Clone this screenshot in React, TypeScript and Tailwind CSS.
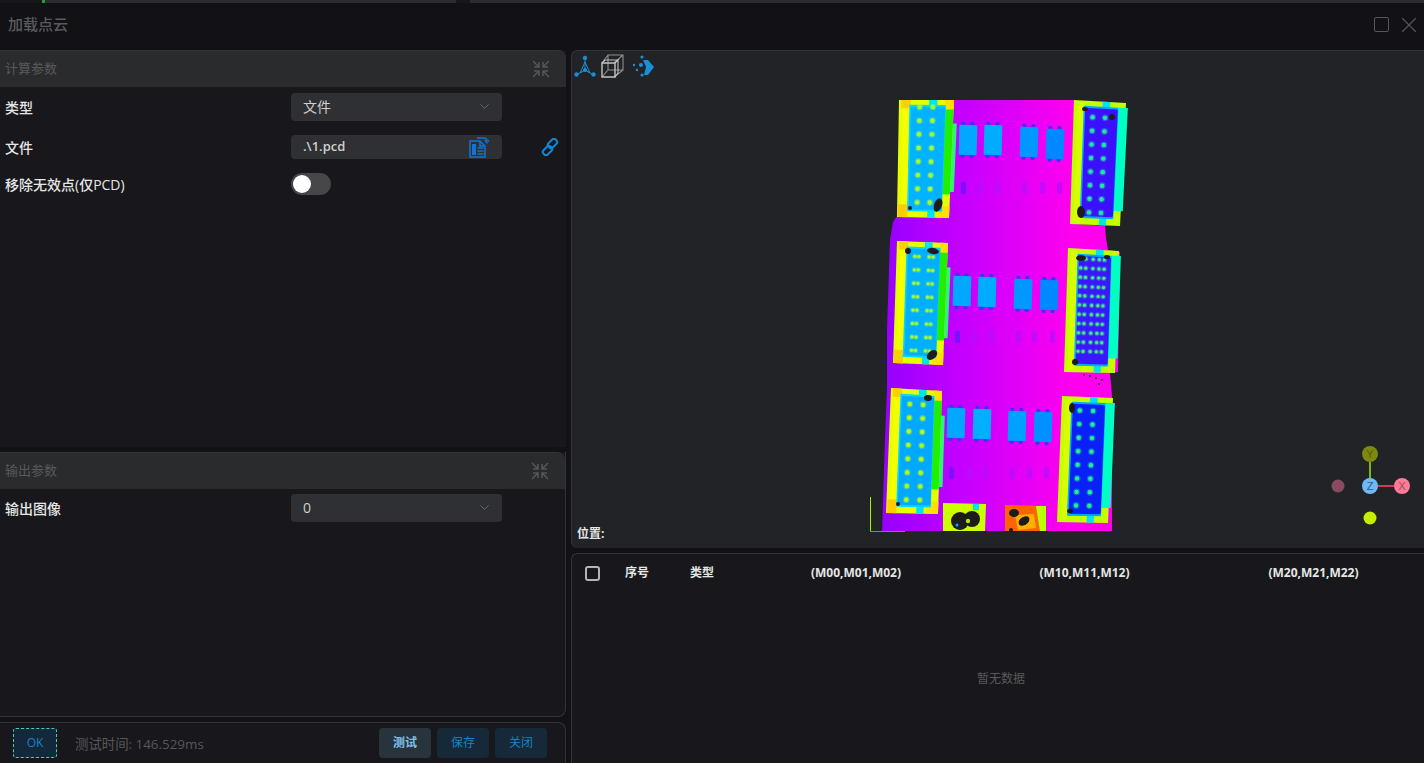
import React from 'react';
import { ChevronDown, X } from 'lucide-react';

type Pt = [number, number];

type Block = {
  c: [Pt, Pt, Pt, Pt];
  side: 'left' | 'right';
  inner: string;
  dot: string;
  cols: number[];
  v0: number;
  dv: number;
};

const blocks: Block[] = [
  { c: [[899, 100], [954, 100], [949, 218], [897, 217]], side: 'left', inner: '#00b2ff', dot: '#a8ff30', cols: [0.38, 0.62], v0: 0.06, dv: 0.116 },
  { c: [[897, 241], [948, 243], [943, 365], [893, 363]], side: 'left', inner: '#00b0ff', dot: '#a0ff30', cols: [0.36, 0.44, 0.64, 0.72], v0: 0.12, dv: 0.11 },
  { c: [[891, 388], [942, 391], [938, 514], [886, 513]], side: 'left', inner: '#00a8ff', dot: '#b4ff10', cols: [0.38, 0.64], v0: 0.12, dv: 0.11 },
  { c: [[1074, 100], [1126, 103], [1120, 226], [1070, 224]], side: 'right', inner: '#3a10ff', dot: '#20e8a0', cols: [0.37, 0.61], v0: 0.13, dv: 0.11 },
  { c: [[1068, 248], [1119, 251], [1115, 373], [1064, 372]], side: 'right', inner: '#3a18ff', dot: '#40f080', cols: [0.26, 0.36, 0.5, 0.62, 0.72], v0: 0.08, dv: 0.075 },
  { c: [[1062, 396], [1113, 398], [1108, 523], [1057, 522]], side: 'right', inner: '#0a20f8', dot: '#20f090', cols: [0.36, 0.62], v0: 0.11, dv: 0.108 },
];

const pads = [
  { rects: [[959, 125, '#00a8ff'], [984, 125, '#00acff'], [1020, 127, '#0098ff'], [1046, 129, '#0088ff']], marks: [961, 978, 995, 1022, 1040, 1057], my: 182 },
  { rects: [[953, 276, '#00a8ff'], [978, 277, '#00acff'], [1014, 279, '#0098ff'], [1040, 280, '#0088ff']], marks: [955, 972, 989, 1016, 1032, 1050], my: 331 },
  { rects: [[947, 408, '#00a8ff'], [973, 409, '#00b0ff'], [1008, 411, '#00a0ff'], [1034, 412, '#0090ff']], marks: [949, 967, 983, 1010, 1027, 1044], my: 467 },
] as const;

const holes: [number, number, number, number, number][] = [
  [938, 205, 4, 7, 20], [910, 208, 2, 2, 0], [1081, 212, 4, 6, 0], [1112, 117, 3, 3, 0], [1085, 109, 3, 2, 0],
  [932, 355, 6, 4, -40], [933, 251, 6, 3, 10], [908, 251, 3, 3, 0], [1081, 258, 5, 3, 0], [1075, 362, 3, 3, 0],
  [1107, 257, 3, 2, 0], [928, 398, 4, 3, 0], [898, 504, 2, 2, 0], [1072, 408, 3, 5, 0], [1070, 511, 3, 2, 0],
  [1102, 380, 1, 1, 0], [1096, 378, 1, 1, 0], [1090, 376, 1, 1, 0], [1099, 384, 1, 1, 0], [1084, 375, 1, 1, 0],
];

const at = (b: Block, u: number, v: number): Pt => {
  const [a, d, c, e] = b.c;
  const tx = a[0] + (d[0] - a[0]) * u;
  const ty = a[1] + (d[1] - a[1]) * u;
  const bx = e[0] + (c[0] - e[0]) * u;
  const by = e[1] + (c[1] - e[1]) * u;
  return [tx + (bx - tx) * v, ty + (by - ty) * v];
};

const quad = (b: Block, u0: number, v0: number, u1: number, v1: number) =>
  [at(b, u0, v0), at(b, u1, v0), at(b, u1, v1), at(b, u0, v1)].map((p) => p.join(',')).join(' ');

const BlockShape: React.FC<{ b: Block }> = ({ b }) => {
  const left = b.side === 'left';
  const rows = Math.round((left ? 0.82 : 0.78) / b.dv) + 1;
  const dense = b.cols.length > 2;
  return (
    <g>
      {left && <polygon points={quad(b, 0.98, 0.2, 1.07, 0.78)} fill="#30f080" />}
      <polygon points={quad(b, 0, 0, 1, 1)} fill={left ? '#e4ff00' : '#c4ff00'} />
      <polygon points={quad(b, 0.07, 0.02, 0.2, 0.98)} fill={left ? '#f6ff00' : '#d8ff00'} />
      {left && <polygon points={quad(b, 0.04, 0, 0.22, 0.07)} fill="#ffd000" />}
      {left && <polygon points={quad(b, 0.02, 0.89, 0.2, 1)} fill="#ffcc00" />}
      {left && <polygon points={quad(b, 0.84, 0, 1, 0.08)} fill="#ffe000" />}
      {left && <polygon points={quad(b, 0.78, 0.9, 1, 1)} fill="#ffe000" />}
      <polygon points={quad(b, 0.84, left ? 0.08 : 0.04, left ? 1 : 1.04, left ? 0.8 : 0.88)} fill={left ? '#20f000' : '#00ffc4'} />
      <polygon points={quad(b, 0.55, 0, 0.7, 0.05)} fill="#00e4f0" />
      <polygon points={quad(b, 0.58, 0.94, 0.72, 1)} fill="#00e4f0" />
      <polygon points={quad(b, 0.21, 0.05, 0.84, 0.94)} fill={left ? '#00d8ff' : '#00a8ff'} stroke={left ? '#00d8ff' : '#00a8ff'} strokeWidth="2" strokeLinejoin="round" />
      <polygon points={quad(b, 0.25, 0.07, 0.82, 0.92)} fill={b.inner} stroke={b.inner} strokeWidth="3" strokeLinejoin="round" />
      {Array.from({ length: rows }).flatMap((_, i) =>
        b.cols.map((u) => {
          const [x, y] = at(b, u, b.v0 + i * b.dv);
          return (
            <g key={`${i}-${u}`}>
              <circle cx={x} cy={y} r={dense ? 2.6 : 3.4} fill={b.dot} opacity="0.35" />
              <circle cx={x} cy={y} r={dense ? 1.6 : 2.2} fill={b.dot} />
            </g>
          );
        }),
      )}
    </g>
  );
};

const PointCloud: React.FC = () => (
  <svg viewBox="865 95 265 440" className="absolute left-[293px] top-[44px] w-[265px] h-[440px]">
    <defs>
      <linearGradient id="depth" gradientUnits="userSpaceOnUse" x1="885" y1="300" x2="1075" y2="300">
        <stop offset="0" stopColor="#9600ff" />
        <stop offset="0.4" stopColor="#c400ff" />
        <stop offset="1" stopColor="#ff00ee" />
      </linearGradient>
    </defs>
    <polygon
      points="900,100 1076,100 1076,224 1105,226 1106,238 1108,250 1120,252 1118,372 1110,373 1112,396 1112,531 882,531 885,440 887,388 887,330 890,240 893,222 897,216"
      fill="url(#depth)"
    />
    {blocks.map((b, i) => (
      <BlockShape key={i} b={b} />
    ))}
    {pads.map((row) => (
      <g key={row.my}>
        {row.rects.map(([x, y, fill]) => (
          <g key={x} transform={`rotate(1.5 ${x + 9} ${y + 15})`}>
            <rect x={x + 2} y={y - 3} width="4" height="36" rx="1.5" fill="#3a30ff" />
            <rect x={x + 11} y={y - 3} width="4" height="36" rx="1.5" fill="#3a30ff" />
            <rect x={x} y={y} width="18" height="30" rx="1" fill={fill} />
          </g>
        ))}
        {row.marks.map((x, i) => (
          <rect key={x} x={x} y={row.my} width="5" height="12" rx="2" fill={i === 0 ? '#7a10ff' : '#b010ff'} opacity={i === 0 ? 1 : 0.7} />
        ))}
      </g>
    ))}
    {holes.map(([x, y, rx, ry, r], i) => (
      <ellipse key={i} cx={x} cy={y} rx={rx} ry={ry} transform={`rotate(${r} ${x} ${y})`} fill="#1c1c1c" />
    ))}

    <polygon points="943,503 986,504 985,531 943,531" fill="#ccff00" />
    <rect x="973" y="504" width="6" height="6" fill="#00e4f0" />
    <ellipse cx="960" cy="521" rx="9" ry="9" fill="#1c1c1c" />
    <ellipse cx="972" cy="519" rx="8" ry="8" fill="#1c1c1c" />
    <circle cx="968" cy="521" r="2.2" fill="#b4e800" />
    <circle cx="957" cy="525" r="1.5" fill="#00a8ff" />

    <polygon points="1005,505 1046,506 1046,531 1005,531" fill="#ff6400" />
    <polygon points="1036,506 1046,506 1046,531 1040,531" fill="#b8ff00" />
    <polygon points="1015,515 1034,514 1036,528 1018,530" fill="#ffb000" />
    <ellipse cx="1014" cy="513" rx="5" ry="4" fill="#1c1c1c" />
    <ellipse cx="1024" cy="521" rx="6" ry="4" transform="rotate(-35 1024 521)" fill="#1c1c1c" />
    <circle cx="1011" cy="530" r="2" fill="#1c1c1c" />

    <rect x="870" y="497" width="1" height="34" fill="#a8f000" />
    <rect x="870" y="531" width="35" height="1" fill="#f05a20" />
  </svg>
);

const CollapseIcon: React.FC = () => (
  <svg viewBox="0 0 18 18" className="w-[18px] h-[18px]" fill="none" stroke="#55565a" strokeWidth="1.5">
    <path d="M1 1l6 6M7 2V7H2M17 1l-6 6M11 2V7h5M1 17l6-6M7 16V11H2M17 17l-6-6M11 16V11h5" />
  </svg>
);

const PanelHeader: React.FC<{ title: string }> = ({ title }) => (
  <div className="flex items-center justify-between h-[37px] bg-[#2a2b2d] rounded-tr-lg pl-[5px] pr-[16px] border-t border-[#333436]">
    <span className="text-[13px] text-[#59595c]">{title}</span>
    <CollapseIcon />
  </div>
);

const Field: React.FC<{ label: string; children: React.ReactNode; className?: string }> = ({ label, children, className }) => (
  <div className={`flex items-center pl-[5px] ${className ?? ''}`}>
    <span className="w-[286px] text-[14px] font-medium text-[#e6e6e6]">{label}</span>
    {children}
  </div>
);

const Select: React.FC<{ value: string }> = ({ value }) => (
  <div className="flex items-center justify-between w-[211px] h-[28px] bg-[#2f3033] rounded pl-[12px] pr-[10px] pb-[1px] text-[14px] text-[#cfcfcf]">
    <span>{value}</span>
    <ChevronDown size={15} strokeWidth={1.3} color="#77787b" />
  </div>
);

const FileIcon: React.FC = () => (
  <svg viewBox="0 0 20 22" className="w-[20px] h-[22px]" fill="none" stroke="#1173d4" strokeWidth="1.5">
    <path d="M1 5h10l5 5v11H1z" />
    <path d="M11 5v5h5" />
    <path d="M3 8h4v11H3z" fill="#1173d4" stroke="none" />
    <path d="M8.5 12h6M8.5 15h6M8.5 18h6" />
    <path d="M8 2h7c2 0 3 1 3 3" />
    <path d="M15.5 4l2.5 3 2-3" strokeWidth="1.2" />
  </svg>
);

const LinkIcon: React.FC = () => (
  <svg viewBox="0 0 18 18" className="w-[18px] h-[18px]" fill="none" stroke="#0f86d8" strokeWidth="2">
    <rect x="8.5" y="0.5" width="6" height="10" rx="2.4" transform="rotate(45 11.5 5.5)" />
    <rect x="3.5" y="7.5" width="6" height="10" rx="2.4" transform="rotate(45 6.5 12.5)" />
  </svg>
);

const AxisIcon: React.FC = () => (
  <svg viewBox="0 0 24 24" className="w-[24px] h-[24px]" fill="none" stroke="#1b8ed8" strokeWidth="1">
    <path d="M12 3v13M12 16L3 21M12 16l9 5" />
    <path d="M12 8L7 19l5-3 5 3z" />
    <circle cx="12" cy="4" r="1.8" fill="#1b8ed8" />
    <circle cx="3.5" cy="20.5" r="1.8" fill="#1b8ed8" />
    <circle cx="20.5" cy="20.5" r="1.8" fill="#1b8ed8" />
    <circle cx="12" cy="16" r="1.5" fill="#1b8ed8" />
  </svg>
);

const CubeIcon: React.FC = () => (
  <svg viewBox="0 0 24 24" className="w-[24px] h-[24px]" fill="none" stroke="#c4c4c4" strokeWidth="1.1">
    <path d="M8 1h15v15H8zM8 1L2 9M23 1l-9 8M23 16l-9 7M8 16l-6 7" stroke="#8f8f8f" />
    <path d="M2 9h13v14H2z" strokeWidth="1.4" />
    <path d="M2 9l3-3h13l-3 3M15 9l3-3v13l-3 4" />
  </svg>
);

const PointsIcon: React.FC = () => (
  <svg viewBox="0 0 24 24" className="w-[24px] h-[24px]" fill="#1b8ed8">
    <circle cx="11" cy="3" r="1.6" />
    <circle cx="3" cy="11" r="1.2" />
    <circle cx="6" cy="16" r="1.2" />
    <circle cx="11" cy="21" r="1.6" />
    <circle cx="10" cy="11" r="2" />
    <path d="M12 6h5l6 7-6 8h-4l2-8z" />
  </svg>
);

const Gizmo: React.FC = () => (
  <svg viewBox="0 0 90 90" className="absolute left-[756px] top-[395px] w-[90px] h-[90px]">
    <line x1="42" y1="8" x2="42" y2="40" stroke="#7cb518" strokeWidth="2" />
    <line x1="42" y1="40" x2="74" y2="40" stroke="#d63a52" strokeWidth="2" />
    <circle cx="42" cy="8" r="8" fill="#7c8a10" />
    <circle cx="10" cy="40" r="6.5" fill="#8a4a60" />
    <circle cx="42" cy="72" r="6.5" fill="#c6ee00" />
    <circle cx="42" cy="40" r="8" fill="#6fb9f5" />
    <circle cx="74" cy="40" r="8" fill="#ff7b96" />
    <text x="42" y="12" textAnchor="middle" fontSize="11" fill="#56600c" fontFamily="Liberation Sans">Y</text>
    <text x="42" y="44" textAnchor="middle" fontSize="11" fill="#2f5c80" fontFamily="Liberation Sans">Z</text>
    <text x="74" y="44" textAnchor="middle" fontSize="11" fill="#a04a5c" fontFamily="Liberation Sans">X</text>
  </svg>
);

const App: React.FC = () => {
  return (
    <div className="flex flex-col w-[1424px] h-[763px] overflow-hidden bg-[#111116] font-['Open_Sans','Noto_Sans_CJK_SC',sans-serif]">
      <div className="flex h-[3px] bg-[#111116]">
        <div className="w-[42px] bg-[#17181b]" />
        <div className="w-[3px] bg-[#2c9a2c]" />
        <div className="w-[411px] bg-[#2a2c30]" />
        <div className="w-[14px] bg-[#17181b]" />
        <div className="flex-1 bg-[#2a2c30]" />
      </div>

      <div className="flex items-center justify-between h-[47px] pl-[8px] pr-[2px] pb-[4px]">
        <span className="text-[15px] font-medium text-[#5b5b5e]">加载点云</span>
        <div className="flex items-center gap-[7px]">
          <div className="w-[15px] h-[15px] border-[1.5px] border-[#55565a] rounded-[2px]" />
          <X size={26} strokeWidth={1.1} color="#55565a" />
        </div>
      </div>

      <div className="flex flex-1 gap-[5px] min-h-0">
        <div className="flex flex-col w-[566px] gap-[5px]">
          <section className="h-[397px] bg-[#18181c]">
            <PanelHeader title="计算参数" />
            <Field label="类型" className="mt-[6px]">
              <Select value="文件" />
            </Field>
            <Field label="文件" className="mt-[14px]">
              <div className="flex items-center justify-between w-[211px] h-[24px] bg-[#2f3033] rounded pl-[12px] pr-[13px] text-[13px] font-semibold text-[#cfcfcf]">
                <span>.\1.pcd</span>
                <FileIcon />
              </div>
              <div className="ml-[39px]">
                <LinkIcon />
              </div>
            </Field>
            <Field label="移除无效点(仅PCD)" className="mt-[14px]">
              <div className="flex items-center w-[40px] h-[22px] bg-[#47474a] rounded-full pl-[2px]">
                <div className="w-[18px] h-[18px] bg-white rounded-full" />
              </div>
            </Field>
          </section>

          <section className="h-[265px] bg-[#18181c] rounded-br-lg border-r border-b border-[#333436]">
            <PanelHeader title="输出参数" />
            <Field label="输出图像" className="mt-[5px]">
              <Select value="0" />
            </Field>
          </section>

          <footer className="flex flex-1 items-start bg-[#18181c] rounded-tr-lg border-t border-r border-[#333436] pl-[13px] pr-[18px] pt-[5px]">
            <div className="flex items-center justify-center w-[44px] h-[30px] bg-[#13283a] border border-dashed border-[#3fd4b0] rounded-[3px] text-[12px] text-[#1a82c4]">
              OK
            </div>
            <span className="ml-[18px] h-[30px] leading-[32px] text-[13.4px] text-[#55565a]">测试时间: 146.529ms</span>
            <div className="flex gap-[6px] ml-auto">
              <button className="w-[52px] h-[30px] bg-[#28343c] rounded text-[12px] font-semibold text-[#7fc0e8]">测试</button>
              <button className="w-[52px] h-[30px] bg-[#152938] rounded text-[12px] text-[#1a82c4]">保存</button>
              <button className="w-[52px] h-[30px] bg-[#152938] rounded text-[12px] text-[#1a82c4]">关闭</button>
            </div>
          </footer>
        </div>

        <div className="flex flex-col flex-1 gap-[5px] min-w-0">
          <div className="relative h-[498px] bg-[#212326] rounded-l-md border-t border-l border-[#333436]">
            <div className="flex items-center gap-[3px] pl-[1px] pt-[3px]">
              <AxisIcon />
              <CubeIcon />
              <div className="ml-[4px]">
                <PointsIcon />
              </div>
            </div>
            <PointCloud />
            <Gizmo />
            <span className="absolute left-[5px] top-[474px] text-[12px] font-bold text-[#e6e6e6]">位置:</span>
          </div>

          <div className="flex-1 flex flex-col bg-[#18181c] rounded-tl-md border-t border-l border-[#333436]">
            <div className="grid grid-cols-[53px_65px_52px_228px_229px_229px] items-center h-[38px] text-[12px] font-bold text-[#e6e6e6]">
              <div className="pl-[13px]">
                <div className="w-[15px] h-[15px] border-2 border-[#b4b4b4] rounded-[3px]" />
              </div>
              <span>序号</span>
              <span>类型</span>
              <span className="text-center">(M00,M01,M02)</span>
              <span className="text-center">(M10,M11,M12)</span>
              <span className="text-center">(M20,M21,M22)</span>
            </div>
            <div className="flex-1 flex items-center justify-center pl-[6px] pt-[2px] text-[12px] text-[#58585b]">暂无数据</div>
          </div>
        </div>
      </div>
    </div>
  );
};

export default App;
